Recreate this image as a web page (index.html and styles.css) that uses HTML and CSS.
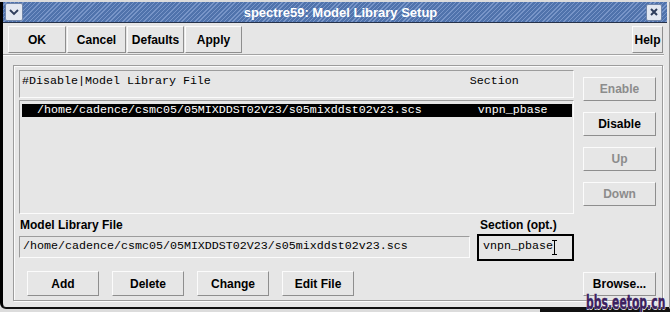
FILE: index.html
```html
<!DOCTYPE html>
<html lang="en">
<head>
    <meta charset="UTF-8">
    <title>spectre59: Model Library Setup</title>
    <link rel="stylesheet" href="styles.css">
</head>
<body>
    <div class="window">
        <!-- Title bar -->
        <div class="titlebar">
            <span class="tb-btn tb-menu">
                <svg width="16" height="16" viewBox="0 0 16 16"><polyline points="4,6 8,10 12,6" fill="none" stroke="#2e3d5c" stroke-width="1.8"/></svg>
            </span>
            <span class="title">spectre59: Model Library Setup</span>
            <span class="tb-btn tb-close">
                <svg width="14" height="14" viewBox="0 0 14 14"><path d="M4 4 L10 10 M10 4 L4 10" stroke="#2e3d5c" stroke-width="2"/></svg>
            </span>
        </div>

        <!-- Top buttons -->
        <div class="toolbar">
            <button class="btn btn-ok">OK</button>
            <button class="btn btn-cancel">Cancel</button>
            <button class="btn btn-defaults">Defaults</button>
            <button class="btn btn-apply">Apply</button>
            <button class="btn btn-help">Help</button>
        </div>
        <div class="separator"></div>

        <!-- Main frame -->
        <div class="frame">
            <div class="list">
                <div class="list-head">#Disable|Model Library File                                     Section</div>
                <div class="list-body">
                    <div class="list-row selected">  /home/cadence/csmc05/05MIXDDST02V23/s05mixddst02v23.scs        vnpn_pbase</div>
                </div>
            </div>

            <div class="side">
                <button class="btn side-btn disabled">Enable</button>
                <button class="btn side-btn">Disable</button>
                <button class="btn side-btn disabled">Up</button>
                <button class="btn side-btn disabled">Down</button>
            </div>

            <div class="fields">
                <div class="field-group group-file">
                    <label class="field-label">Model Library File</label>
                    <div class="entry">/home/cadence/csmc05/05MIXDDST02V23/s05mixddst02v23.scs</div>
                </div>
                <div class="field-group group-section">
                    <label class="field-label">Section (opt.)</label>
                    <div class="entry entry-focus">vnpn_pbase<svg class="caret" width="5" height="15" viewBox="0 0 5 15"><path d="M0 0.5 H5 M2.5 0.5 V14.5 M0 14.5 H5" stroke="#000" stroke-width="1"/></svg></div>
                </div>
            </div>
            <div class="browse-spacer"></div>

            <div class="actions">
                <button class="btn act-btn">Add</button>
                <button class="btn act-btn">Delete</button>
                <button class="btn act-btn">Change</button>
                <button class="btn act-btn">Edit File</button>
            </div>
            <div class="browse-cell">
                <button class="btn side-btn">Browse...</button>
            </div>
        </div>

        <div class="watermark">bbs.eetop.cn</div>
    </div>
    <div class="desktop"></div>
</body>
</html>
```

FILE: styles.css
```css
body {
    margin: 0;
    width: 670px;
    height: 312px;
    overflow: hidden;
    background-color: #dcdcdc;
    font-family: "Liberation Sans", Arial, sans-serif;
}
.window {
    position: relative;
    height: 307px;
    box-sizing: border-box;
    background-color: #e6e6e6;
    border-left: 3px solid #000;
    border-right: 1px solid #9a9a9a;
    border-bottom: 2px solid #111;
    border-bottom-left-radius: 6px;
}
.desktop {
    height: 5px;
    margin-left: 540px;
    background-color: #111;
}

/* title bar */
.titlebar {
    display: flex;
    align-items: center;
    height: 20px;
    margin: 2px 2px 0 0;
    padding: 0 5px 0 2px;
    border-bottom: 1px solid #26324a;
    background: repeating-linear-gradient(135deg, #5073ac 0 2px, #7895c8 2px 3px);
}
.tb-btn {
    display: flex;
    align-items: center;
    justify-content: center;
    box-sizing: border-box;
    background-color: #e3e8f1;
    border: 1px solid #7186aa;
    border-radius: 2px;
}
.tb-menu {
    width: 18px;
    height: 18px;
}
.tb-close {
    width: 16px;
    height: 17px;
}
.title {
    flex: 1;
    text-align: center;
    padding-left: 12px;
    color: #ffffff;
    font-size: 13px;
    font-weight: bold;
}

/* buttons */
.btn {
    box-sizing: border-box;
    padding: 0;
    background-color: #e6e6e6;
    border: 1px solid;
    border-color: #fbfbfb #8e8e8e #8e8e8e #fbfbfb;
    font-family: "Liberation Sans", Arial, sans-serif;
    font-size: 12px;
    font-weight: bold;
    color: #000;
}
.btn.disabled {
    color: #8c8c8c;
}

.toolbar {
    display: flex;
    gap: 1px;
    padding: 3px 6px 0 5px;
    margin-bottom: 1px;
}
.toolbar .btn {
    height: 27px;
}
.btn-ok { width: 58px; }
.btn-cancel { width: 59px; }
.btn-defaults { width: 57px; }
.btn-apply { width: 57px; }
.btn-help {
    width: 31px;
    margin-left: auto;
}
.separator {
    margin-right: 5px;
    border-top: 1px solid #a3a3a3;
    border-bottom: 1px solid #fbfbfb;
}

/* main frame */
.frame {
    display: grid;
    grid-template-columns: 555px 73px;
    grid-template-rows: 144px 57px 25px;
    column-gap: 9px;
    box-sizing: border-box;
    width: 650px;
    height: 236px;
    margin: 9px 0 0 10px;
    padding: 4px 0 0 5px;
    border: 1px solid #9c9c9c;
    box-shadow: inset 1px 1px 0 #fbfbfb, 1px 1px 0 #fbfbfb;
}

.list {
    display: flex;
    flex-direction: column;
}
.list-head,
.list-body {
    box-sizing: border-box;
    border: 1px solid;
    border-color: #9c9c9c #fbfbfb #fbfbfb #9c9c9c;
    font-family: "Liberation Mono", "Courier New", monospace;
    font-size: 11.67px;
}
.list-head {
    height: 28px;
    padding-left: 2px;
    line-height: 21px;
    white-space: pre;
}
.list-body {
    height: 114px;
    margin-top: 2px;
    padding-top: 3px;
}
.list-row {
    height: 13px;
    margin: 0 1px 0 2px;
    padding-left: 1px;
    line-height: 13px;
    white-space: pre;
}
.list-row.selected {
    background-color: #000;
    color: #fff;
}

.side {
    display: flex;
    flex-direction: column;
    gap: 11px;
    padding-top: 7px;
}
.side-btn {
    width: 73px;
    height: 24px;
}

/* entry fields */
.fields {
    display: flex;
    gap: 7px;
}
.field-group {
    display: flex;
    flex-direction: column;
}
.group-file { width: 451px; }
.group-section { width: 97px; }
.field-label {
    margin-top: 4px;
    padding-left: 1px;
    font-size: 12px;
    font-weight: bold;
    line-height: 14px;
}
.group-section .field-label {
    padding-left: 3px;
}
.entry {
    box-sizing: border-box;
    height: 22px;
    margin-top: 4px;
    padding: 0 3px;
    border: 1px solid;
    border-color: #9c9c9c #fbfbfb #fbfbfb #9c9c9c;
    font-family: "Liberation Mono", "Courier New", monospace;
    font-size: 11.67px;
    line-height: 18px;
    white-space: pre;
}
.entry-focus {
    display: flex;
    align-items: center;
    height: 27px;
    margin-top: 2px;
    padding: 0 0 1px 4px;
    border: 2px solid #000;
    line-height: 1;
}
.caret {
    margin-left: -1px;
}

.actions {
    display: flex;
    gap: 13px;
    padding-left: 8px;
}
.act-btn {
    width: 72px;
    height: 25px;
}
.browse-cell .side-btn {
    margin-top: 1px;
}

/* overlay */
.watermark {
    position: absolute;
    left: 583px;
    top: 291px;
    font-family: "DejaVu Sans", sans-serif;
    font-size: 19px;
    font-weight: bold;
    line-height: 1;
    color: #3c1f5f;
    -webkit-text-stroke: 0.5px #3c1f5f;
    text-shadow: 1px 0 0 #fff, 0 1px 0 #fff;
    transform: scaleX(0.57);
    transform-origin: left top;
}
```
